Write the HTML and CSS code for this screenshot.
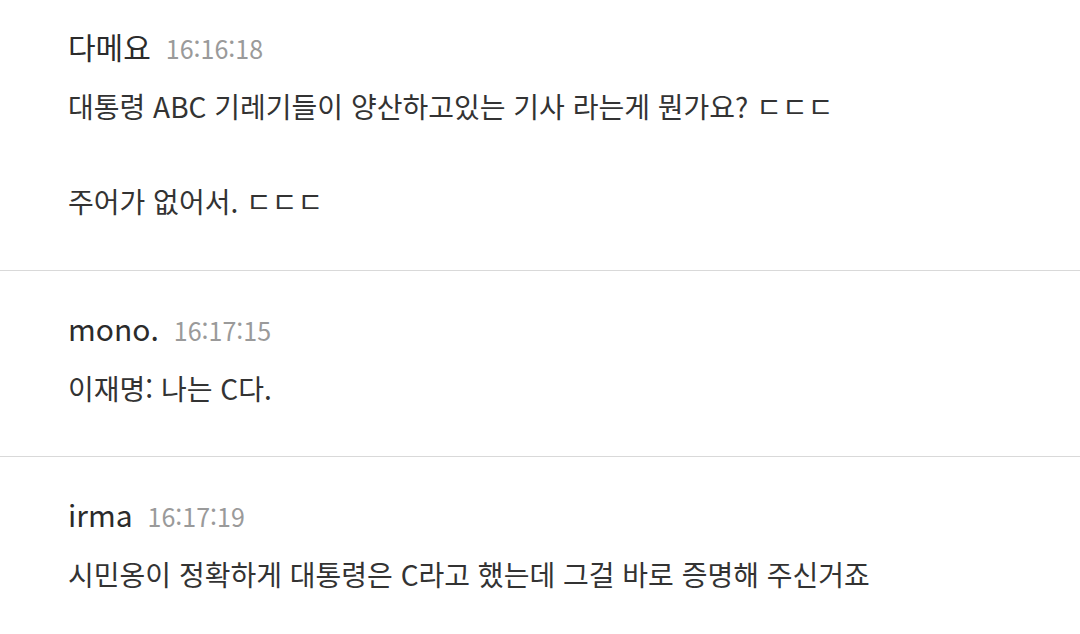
FILE: index.html
```html
<!DOCTYPE html>
<html lang="ko">
<head>
<meta charset="utf-8">
<link rel="stylesheet" href="styles.css">
</head>
<body>
<div class="list">
  <div class="msg">
    <div class="head"><span class="name">다메요</span><span class="time">16:16:18</span></div>
    <div class="text">대통령 ABC 기레기들이 양산하고있는 기사 라는게 뭔가요? ㄷㄷㄷ<br><br>주어가 없어서. ㄷㄷㄷ</div>
  </div>
  <div class="msg">
    <div class="head"><span class="name">mono.</span><span class="time">16:17:15</span></div>
    <div class="text">이재명: 나는 C다.</div>
  </div>
  <div class="msg">
    <div class="head"><span class="name">irma</span><span class="time">16:17:19</span></div>
    <div class="text">시민옹이 정확하게 대통령은 C라고 했는데 그걸 바로 증명해 주신거죠</div>
  </div>
</div>
</body>
</html>
```
FILE: styles.css
```css
html, body {
  margin: 0;
  padding: 0;
  background: #ffffff;
  overflow: hidden;
}
body {
  font-family: "Noto Sans CJK KR", "Noto Sans", sans-serif;
  color: #333333;
}
.list {
  margin-top: -11px;
}
.msg {
  padding: 37px 20px 44px 68px;
  border-bottom: 1px solid #d9d9d9;
}
.head {
  display: flex;
  align-items: baseline;
  gap: 15px;
  height: 40px;
  line-height: 40px;
}
.name {
  font-size: 30px;
  color: #2b2b2b;
}
.time {
  font-size: 25px;
  color: #9a9a9a;
}
.text {
  margin-top: 17px;
  font-size: 28px;
  line-height: 47.5px;
  color: #333333;
}
```
